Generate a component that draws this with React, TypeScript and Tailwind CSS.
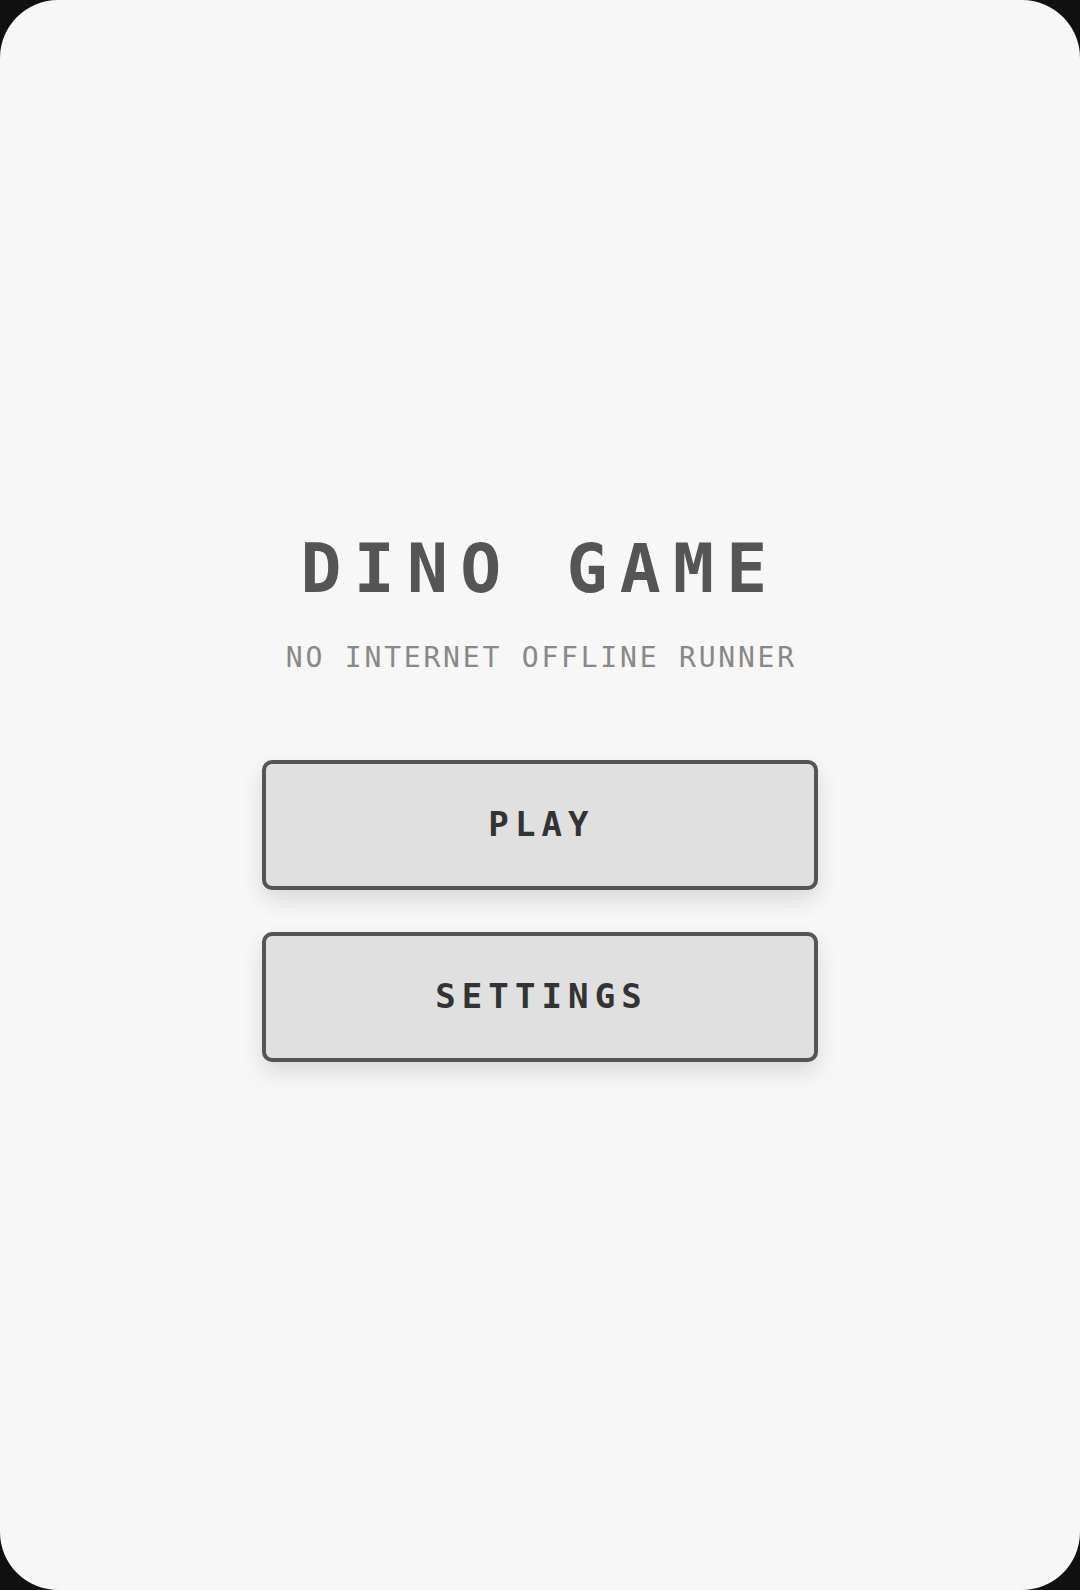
import React from "react";

const MenuButton = ({ label }: { label: string }) => (
  <button className="w-[556px] h-[130px] rounded-[10px] border-4 border-[#555555] bg-[#e0e0e0] text-[#333333] text-[34px] font-bold tracking-[0.18em] shadow-[0_10px_22px_rgba(0,0,0,0.12)] flex items-center justify-center">
    <span className="pl-[3px]">{label}</span>
  </button>
);

export default function App() {
  return (
    <div className="w-[1080px] h-[1590px] bg-[#111111]">
      <div
        className="w-full h-full pt-[6px] rounded-[58px] bg-[#f7f7f7] flex flex-col items-center justify-center"
        style={{ fontFamily: '"DejaVu Sans Mono", "Liberation Mono", monospace' }}
      >
        <h1 className="text-[68px] leading-none font-bold text-[#555555] tracking-[12.3px]">
          DINO GAME
        </h1>
        <p className="mt-[41px] text-[28px] leading-none text-[#888888] tracking-[0.1em] pl-[0.1em]">
          NO INTERNET OFFLINE RUNNER
        </p>
        <div className="mt-[88px] flex flex-col gap-[42px]">
          <MenuButton label="PLAY" />
          <MenuButton label="SETTINGS" />
        </div>
      </div>
    </div>
  );
}
